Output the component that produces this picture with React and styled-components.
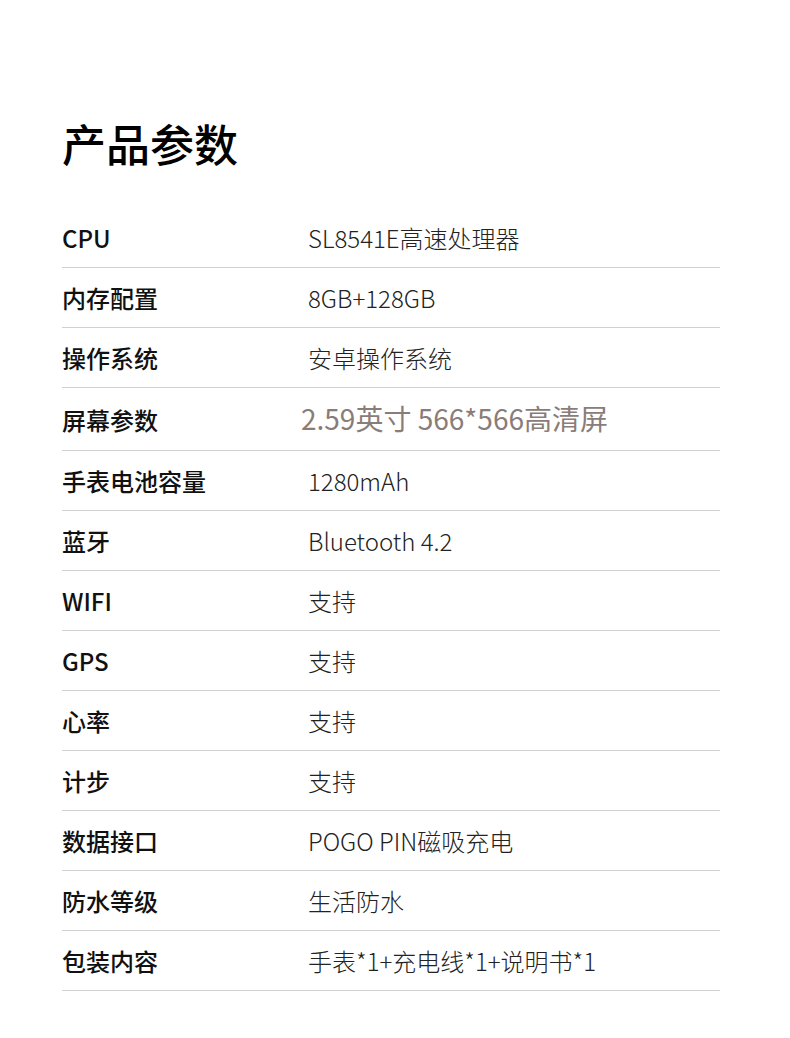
import React from "react";
import styled, { createGlobalStyle } from "styled-components";

const GlobalStyle = createGlobalStyle`
  body {
    margin: 0;
    background: #fff;
    font-family: "Noto Sans CJK SC", "Noto Sans", sans-serif;
  }
`;

const specs = [
  { label: "CPU", value: "SL8541E高速处理器" },
  { label: "内存配置", value: "8GB+128GB" },
  { label: "操作系统", value: "安卓操作系统" },
  { label: "屏幕参数", value: "2.59英寸 566*566高清屏", accent: true },
  { label: "手表电池容量", value: "1280mAh" },
  { label: "蓝牙", value: "Bluetooth 4.2" },
  { label: "WIFI", value: "支持" },
  { label: "GPS", value: "支持" },
  { label: "心率", value: "支持" },
  { label: "计步", value: "支持" },
  { label: "数据接口", value: "POGO PIN磁吸充电" },
  { label: "防水等级", value: "生活防水" },
  { label: "包装内容", value: "手表*1+充电线*1+说明书*1" },
];

const App = () => {
  return (
    <>
      <GlobalStyle />
      <StPage>
        <StTitle>产品参数</StTitle>
        <StTable>
          {specs.map((item) => (
            <StRow key={item.label} $accent={item.accent}>
              <StLabel>{item.label}</StLabel>
              <StValue $accent={item.accent}>{item.value}</StValue>
            </StRow>
          ))}
        </StTable>
      </StPage>
    </>
  );
};

export default App;

const StPage = styled.div`
  width: 658px;
  padding: 113px 70px 48px 62px;
`;

const StTitle = styled.h1`
  margin: 0 0 35px;
  font-size: 44px;
  line-height: 60px;
  font-weight: 500;
  color: #000;
`;

const StTable = styled.div`
  display: flex;
  flex-direction: column;
`;

const StRow = styled.div`
  display: grid;
  grid-template-columns: 246px 1fr;
  align-items: center;
  height: ${(p) => (p.$accent ? "62px" : "59px")};
  border-bottom: 1px solid #d0d0d0;
`;

const StLabel = styled.div`
  font-size: 24px;
  font-weight: 500;
  color: #111;
  white-space: nowrap;
`;

// 屏幕参数那一行字体和颜色不一样
const StValue = styled.div`
  font-size: ${(p) => (p.$accent ? "28px" : "24px")};
  font-weight: ${(p) => (p.$accent ? 400 : 300)};
  color: ${(p) => (p.$accent ? "#8a7c78" : "#222")};
  margin-left: ${(p) => (p.$accent ? "-7px" : "0")};
  margin-top: ${(p) => (p.$accent ? "-3px" : "0")};
  white-space: nowrap;
`;
